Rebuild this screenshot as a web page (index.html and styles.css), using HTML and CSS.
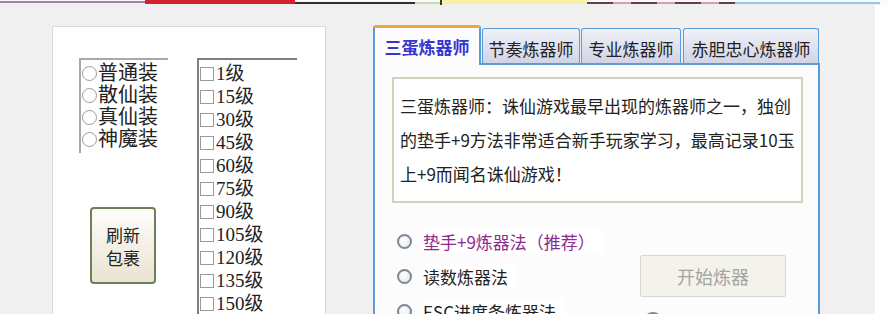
FILE: index.html
```html
<!DOCTYPE html>
<html lang="zh-CN">
<head>
  <meta charset="UTF-8" />
  <title>炼器助手</title>
  <link rel="stylesheet" href="styles.css">
</head>
<body>
  <div class="strip">
    <span class="seg seg-purple"></span>
    <span class="seg seg-red"></span>
    <span class="seg seg-dark"></span>
    <span class="seg seg-mix"></span>
    <span class="seg seg-yellow"></span>
    <span class="seg seg-dash"></span>
    <span class="seg seg-blue"></span>
  </div>

  <div class="main">
    <div class="bag-panel">
      <div class="col-left">
        <div class="type-list">
          <div class="type-item"><span class="dot"></span>普通装</div>
          <div class="type-item"><span class="dot"></span>散仙装</div>
          <div class="type-item"><span class="dot"></span>真仙装</div>
          <div class="type-item"><span class="dot"></span>神魔装</div>
        </div>
        <button class="refresh-btn"><span class="btn-line">刷新</span><span class="btn-line">包裹</span></button>
      </div>
      <div class="level-list">
        <div class="level-item"><span class="box"></span>1级</div>
        <div class="level-item"><span class="box"></span>15级</div>
        <div class="level-item"><span class="box"></span>30级</div>
        <div class="level-item"><span class="box"></span>45级</div>
        <div class="level-item"><span class="box"></span>60级</div>
        <div class="level-item"><span class="box"></span>75级</div>
        <div class="level-item"><span class="box"></span>90级</div>
        <div class="level-item"><span class="box"></span>105级</div>
        <div class="level-item"><span class="box"></span>120级</div>
        <div class="level-item"><span class="box"></span>135级</div>
        <div class="level-item"><span class="box"></span>150级</div>
      </div>
    </div>

    <div class="refiner">
      <div class="tab-row">
        <div class="tab tab-active">三蛋炼器师</div>
        <div class="tab tab-2">节奏炼器师</div>
        <div class="tab tab-3">专业炼器师</div>
        <div class="tab tab-4">赤胆忠心炼器师</div>
      </div>
      <div class="tab-panel">
        <div class="desc">
          三蛋炼器师：诛仙游戏最早出现的炼器师之一，独创<br>
          的垫手+9方法非常适合新手玩家学习，最高记录10玉<br>
          上+9而闻名诛仙游戏！
        </div>
        <div class="methods">
          <div class="method-list">
            <label class="method method-hot"><span class="radio"></span><span class="method-text">垫手+9炼器法（推荐）</span></label>
            <label class="method"><span class="radio"></span><span class="method-text">读数炼器法</span></label>
            <label class="method"><span class="radio"></span><span class="method-text">ESC进度条炼器法</span></label>
          </div>
          <div class="method-side">
            <button class="start-btn" disabled>开始炼器</button>
            <span class="radio side-radio"></span>
          </div>
        </div>
      </div>
    </div>

    <div class="edge"></div>
  </div>
</body>
</html>
```

FILE: styles.css
```css
body {
  margin: 0;
  width: 887px;
  height: 314px;
  overflow: hidden;
  background-color: #f0f0f0;
  font-family: "Noto Sans CJK SC", sans-serif;
  color: #222;
}

/* top colour strip */
.strip {
  display: flex;
  height: 5px;
  background-color: #fafafa;
}
.seg {
  display: block;
  height: 5px;
}
.seg-purple {
  width: 145px;
  background: linear-gradient(#fafafa 0 1px, #a77bb4 1px 3px, #f0f0f0 3px);
}
.seg-red {
  width: 150px;
  background: linear-gradient(#d3202c 0 4px, #f0f0f0 4px);
}
.seg-dark {
  width: 120px;
  background: linear-gradient(#fafafa 0 2px, #2e3033 2px 4px, #f0f0f0 4px);
}
.seg-mix {
  width: 25px;
  background: linear-gradient(#fafafa 0 2px, #c8d8b0 2px 4px, #f0f0f0 4px);
}
.seg-yellow {
  width: 147px;
  background: linear-gradient(#f7f0a6 0 4px, #f0f0f0 4px);
  box-shadow: inset 2px 0 #3a3a2a;
}
.seg-dash {
  width: 148px;
  background:
    linear-gradient(#fafafa 0 2px, transparent 2px 4px, #f0f0f0 4px),
    repeating-linear-gradient(90deg, #6b3d52 0 26px, #d99ab6 26px 44px);
}
.seg-blue {
  width: 145px;
  background: linear-gradient(#fafafa 0 2px, #9cc6e8 2px 4px, #f0f0f0 4px);
}

.main {
  display: flex;
  align-items: flex-start;
  height: 309px;
  overflow: hidden;
}

/* left bag panel */
.bag-panel {
  display: flex;
  gap: 29px;
  margin: 21px 0 0 52px;
  width: 274px;
  height: 300px;
  padding: 31px 0 0 26px;
  box-sizing: border-box;
  background-color: #fff;
  border: 1px solid #dadada;
  font-family: "Liberation Serif", "Noto Sans CJK SC", serif;
}
.col-left {
  width: 89px;
}
.type-list {
  height: 95px;
  box-sizing: border-box;
  padding-top: 2px;
  border-top: 2px solid #a8a8a8;
  border-left: 2px solid #a8a8a8;
}
.type-item {
  display: flex;
  align-items: center;
  height: 22px;
  font-size: 20px;
  line-height: 22px;
}
.dot {
  width: 13px;
  height: 13px;
  margin: 0 1px 0 1px;
  border: 1px solid #9a9a9a;
  border-radius: 50%;
}
.refresh-btn {
  display: flex;
  flex-direction: column;
  align-items: center;
  justify-content: center;
  width: 66px;
  height: 77px;
  margin: 54px 0 0 11px;
  padding: 0;
  border: 2px solid #6d7f56;
  border-radius: 4px;
  background: linear-gradient(#fdfdfa, #ebe3d2);
  font-family: "Noto Sans CJK SC", sans-serif;
  font-size: 17px;
  color: #222;
}
.btn-line {
  display: block;
  line-height: 23px;
}
.level-list {
  width: 100px;
  height: 260px;
  padding: 2px 0 0 1px;
  box-sizing: border-box;
  border-top: 2px solid #7e7e7e;
  border-left: 2px solid #7e7e7e;
}
.level-item {
  display: flex;
  align-items: center;
  height: 23px;
  font-size: 19px;
  line-height: 23px;
}
.box {
  width: 12px;
  height: 12px;
  margin-right: 2px;
  border: 1px solid #9a9a9a;
}

/* right refiner tabs */
.refiner {
  width: 447px;
  margin: 20px 0 0 47px;
}
.tab-row {
  display: flex;
  align-items: flex-end;
  gap: 1px;
}
.tab {
  display: flex;
  align-items: center;
  justify-content: center;
  height: 35px;
  box-sizing: border-box;
  padding-top: 4px;
  border: 1px solid #5a9bdc;
  border-bottom: none;
  border-radius: 3px 3px 0 0;
  background: linear-gradient(#f0f1f8, #d0d4e6);
  font-size: 17px;
  white-space: nowrap;
}
.tab-active {
  position: relative;
  z-index: 1;
  width: 108px;
  height: 40px;
  margin-bottom: -2px;
  padding-top: 0;
  border-left: 2px solid #5a9bdc;
  border-right: 2px solid #5a9bdc;
  border-top: 3px solid #f0a53a;
  background: #fcfcfd;
  color: #3535cf;
  font-weight: bold;
}
.tab-2 { width: 98px; }
.tab-3 { width: 100px; }
.tab-4 { width: 136px; margin-left: 1px; }

.tab-panel {
  height: 260px;
  box-sizing: border-box;
  padding: 12px 0 0 17px;
  border: 2px solid #5a9bdc;
  background-color: #fcfcfd;
}
.desc {
  width: 411px;
  box-sizing: border-box;
  padding: 10px 6px 10px 6px;
  border: 2px solid #cfd2bc;
  background-color: #fff;
  font-size: 17px;
  line-height: 34px;
  white-space: nowrap;
}
.methods {
  display: flex;
  margin: 21px 0 0 5px;
}
.method-list {
  width: 243px;
}
.method {
  display: flex;
  align-items: center;
  gap: 11px;
  height: 35px;
  font-size: 17px;
}
.method-text {
  background-color: #fff;
  padding-right: 8px;
}
.method-hot .method-text {
  color: #8c2a8e;
}
.radio {
  display: block;
  width: 11px;
  height: 11px;
  border: 2px solid #7d8896;
  border-radius: 50%;
  background: radial-gradient(circle at 40% 35%, #fff, #dfe5ec);
}
.method-side {
  padding-top: 31px;
}
.start-btn {
  display: block;
  width: 146px;
  height: 42px;
  border: 1px solid #d6d6cc;
  border-radius: 2px;
  background-color: #f3f3ec;
  font-family: "Noto Sans CJK SC", sans-serif;
  font-size: 18px;
  color: #a3a3a0;
}
.side-radio {
  margin: 15px 0 0 3px;
  width: 16px;
  height: 16px;
}

.edge {
  width: 12px;
  height: 309px;
  margin-left: auto;
  background-color: #fff;
}
```
